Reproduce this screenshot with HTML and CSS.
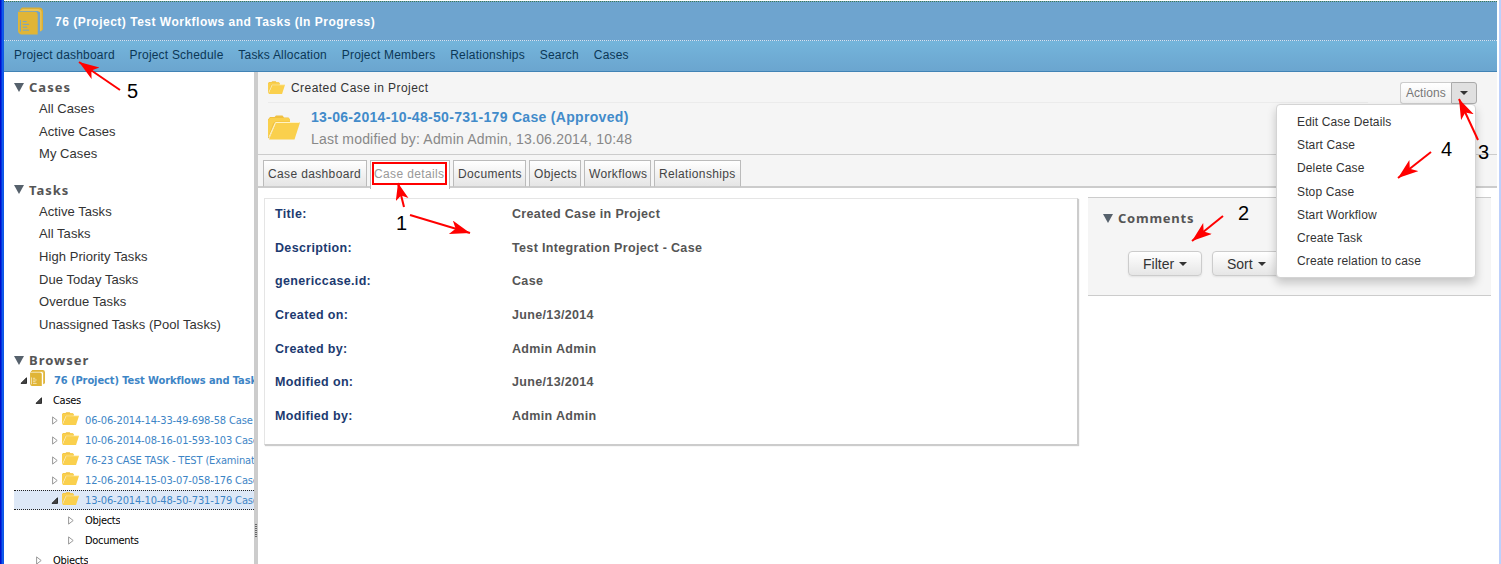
FILE: index.html
```
<!DOCTYPE html>
<html lang="en">
<head>
<meta charset="utf-8">
<title>Case details</title>
<link rel="stylesheet" href="styles.css">
</head>
<body>
<svg class="defs" width="0" height="0">
  <symbol id="folder" viewBox="0 0 32 24">
    <path fill="#f0c040" d="M0 22V4L2 1.500H6.500L8 0H14.500L16 2H20.500L22 4V8H7L1 23Z"/>
    <path fill="#fad04d" d="M0 22V5L2 2.500H20.500L22 4V6H7.500L5 8L0 22Z"/>
    <path fill="#fad04d" d="M8 7H32L26.500 24H1Z"/>
    <path fill="none" stroke="#fff3c4" stroke-width="1" d="M1 21.500L7.500 7H31"/>
  </symbol>
  <symbol id="book" viewBox="0 0 26 28">
    <path fill="#dbae34" d="M4 0H22Q26 0 26 4V23L23 25V6Q23 3.500 20 3.500H1Z"/>
    <path fill="#e9c456" d="M3 2.500L5 1.500H21Q24.500 2 24.500 5V24L23 25V6Q23 3.500 20 3.500H2Z"/>
    <path fill="#e0b537" d="M0 4.500H17.500Q20.500 4.500 20.500 8V28H3Q0 27 0 24Z"/>
    <path fill="none" stroke="currentColor" stroke-width="1" d="M2.500 13V25M5 14.500H9M5 17.500H11.500M5 20.500H9.500M5 23.500H11.500"/>
  </symbol>
  <symbol id="open" viewBox="0 0 7 7"><path fill="#444" stroke="#111" stroke-width=".8" d="M6.500 .8V6.400H.9Z"/></symbol>
  <symbol id="closed" viewBox="0 0 6 9"><path fill="#fff" stroke="#999" d="M.6 .9L5.200 4.500L.6 8.100Z"/></symbol>
  <symbol id="down" viewBox="0 0 10 9"><path fill="#56616c" d="M0 0H10L5 9Z"/></symbol>
  <symbol id="caret" viewBox="0 0 8 4"><path fill="#333" d="M0 0H8L4 4Z"/></symbol>
</svg>
<div class="window">
  <header class="top">
    <svg class="top-icon"><use href="#book"/></svg>
    <h1 class="top-title">76 (Project) Test Workflows and Tasks (In Progress)</h1>
  </header>
  <nav class="nav">
    <a>Project dashboard</a><a>Project Schedule</a><a>Tasks Allocation</a><a>Project Members</a><a>Relationships</a><a>Search</a><a>Cases</a>
  </nav>
  <div class="body">
    <aside class="side">
      <h2 class="head"><svg class="down"><use href="#down"/></svg>Cases</h2>
      <ul class="links"><li>All Cases</li><li>Active Cases</li><li>My Cases</li></ul>
      <h2 class="head"><svg class="down"><use href="#down"/></svg>Tasks</h2>
      <ul class="links"><li>Active Tasks</li><li>All Tasks</li><li>High Priority Tasks</li><li>Due Today Tasks</li><li>Overdue Tasks</li><li>Unassigned Tasks (Pool Tasks)</li></ul>
      <h2 class="head"><svg class="down"><use href="#down"/></svg>Browser</h2>
      <ul class="tree">
        <li class="l0"><svg class="open"><use href="#open"/></svg><svg class="mini-book"><use href="#book"/></svg><span>76 (Project) Test Workflows and Tasks</span></li>
        <li class="l1"><svg class="open"><use href="#open"/></svg><span>Cases</span></li>
        <li class="l2"><svg class="closed"><use href="#closed"/></svg><svg class="fold"><use href="#folder"/></svg><span>06-06-2014-14-33-49-698-58 Case</span></li>
        <li class="l2"><svg class="closed"><use href="#closed"/></svg><svg class="fold"><use href="#folder"/></svg><span>10-06-2014-08-16-01-593-103 Case</span></li>
        <li class="l2"><svg class="closed"><use href="#closed"/></svg><svg class="fold"><use href="#folder"/></svg><span>76-23 CASE TASK - TEST (Examination)</span></li>
        <li class="l2"><svg class="closed"><use href="#closed"/></svg><svg class="fold"><use href="#folder"/></svg><span>12-06-2014-15-03-07-058-176 Case</span></li>
        <li class="l2 selected"><svg class="open"><use href="#open"/></svg><svg class="fold"><use href="#folder"/></svg><span>13-06-2014-10-48-50-731-179 Case</span></li>
        <li class="l3"><svg class="closed"><use href="#closed"/></svg><span>Objects</span></li>
        <li class="l3"><svg class="closed"><use href="#closed"/></svg><span>Documents</span></li>
        <li class="l1"><svg class="closed"><use href="#closed"/></svg><span>Objects</span></li>
      </ul>
    </aside>
    <div class="splitter"><i class="grip"></i></div>
    <main class="main">
      <div class="intro">
        <div class="crumb"><svg class="fold"><use href="#folder"/></svg><span>Created Case in Project</span></div>
        <div class="case">
          <svg class="case-icon"><use href="#folder"/></svg>
          <div><h2 class="case-title">13-06-2014-10-48-50-731-179 Case (Approved)</h2><p class="case-meta">Last modified by: Admin Admin, 13.06.2014, 10:48</p></div>
        </div>
        <div class="actions">
          <div class="split"><span class="act">Actions</span><span class="toggle"><svg class="caret"><use href="#caret"/></svg></span></div>
          <ul class="menu"><li>Edit Case Details</li><li>Start Case</li><li>Delete Case</li><li>Stop Case</li><li>Start Workflow</li><li>Create Task</li><li>Create relation to case</li></ul>
        </div>
      </div>
      <div class="tabs">
        <a class="tab t1">Case dashboard</a><a class="tab t2 active">Case details</a><a class="tab t3">Documents</a><a class="tab t4">Objects</a><a class="tab t5">Workflows</a><a class="tab t6">Relationships</a>
      </div>
      <div class="content">
        <dl class="details">
          <dt>Title:</dt><dd>Created Case in Project</dd>
          <dt>Description:</dt><dd>Test Integration Project - Case</dd>
          <dt>genericcase.id:</dt><dd>Case</dd>
          <dt>Created on:</dt><dd>June/13/2014</dd>
          <dt>Created by:</dt><dd>Admin Admin</dd>
          <dt>Modified on:</dt><dd>June/13/2014</dd>
          <dt>Modified by:</dt><dd>Admin Admin</dd>
        </dl>
        <section class="comments">
          <h2 class="head"><svg class="down"><use href="#down"/></svg>Comments</h2>
          <div class="buttons"><span class="btn">Filter <svg class="caret"><use href="#caret"/></svg></span><span class="btn">Sort <svg class="caret"><use href="#caret"/></svg></span></div>
        </section>
      </div>
    </main>
  </div>
</div>
<svg class="notes" width="1501" height="564" viewBox="0 0 1501 564">
  <defs>
    <marker id="tip" markerUnits="userSpaceOnUse" markerWidth="22" markerHeight="16" refX="20" refY="7" orient="auto"><path fill="#f00" d="M20 7L0 0L5 7L0 14Z"/></marker>
    <marker id="tip-small" markerUnits="userSpaceOnUse" markerWidth="20" markerHeight="14" refX="17" refY="6.500" orient="auto"><path fill="#f00" d="M17 6.500L0 0L4 6.500L0 13Z"/></marker>
  </defs>
  <rect x="373" y="163" width="73" height="21" fill="none" stroke="#f00" stroke-width="2"/>
  <g stroke="#f00" stroke-width="2">
    <path marker-end="url(#tip)" d="M120 90L79 62"/>
    <path marker-end="url(#tip-small)" d="M404 207L398 183"/>
    <path marker-end="url(#tip)" d="M410 215L470 233"/>
    <path marker-end="url(#tip)" d="M1223 216L1192 241"/>
    <path marker-end="url(#tip)" d="M1478 140L1459 99"/>
    <path marker-end="url(#tip)" d="M1431 152L1398 178"/>
  </g>
  <g class="nums"><text x="127" y="98">5</text><text x="396" y="230">1</text><text x="1238" y="220">2</text><text x="1478" y="159">3</text><text x="1441" y="156">4</text></g>
</svg>
</body>
</html>
```

FILE: styles.css
```
* { box-sizing: border-box; }
body { margin: 0; background: #fff; color: #333; font: 13px/20px "Liberation Sans", Arial, sans-serif; overflow: hidden; }
ul, dl, dd, h1, h2, p { margin: 0; padding: 0; list-style: none; }
svg { display: block; flex: none; }
a { white-space: nowrap; }
.defs { position: absolute; }
.window { height: 564px; padding: 1px 2px 0 4px; border-right: 2px solid #bdd0fb; display: flex; flex-direction: column;
  background: linear-gradient(90deg, #0009c0 0, #0014d8 1px, #0a50e8 2px, #1468f0 3px, #0a45dc 4px, #fff 4px); }
.top { height: 40px; flex: none; display: flex; align-items: center; padding-left: 14px; background: #6ea4cf; border-top: 1px dotted #3d7a50; border-bottom: 1px dotted #d5e6f2; }
.top-icon { width: 25px; height: 28px; color: #6ea4cf; margin-right: 12px; }
.top-title { font-size: 12px; letter-spacing: .5px; color: #fff; line-height: 20px; padding-top: 2px; white-space: nowrap; }
.nav { height: 31px; flex: none; display: flex; gap: 15px; padding: 4px 10px 0; font-size: 12px; letter-spacing: .2px; color: #0b3756; background: linear-gradient(#74b5db, #6ba5cf); border-bottom: 1px solid #4183b5; }
.nav a + a { margin-left: -.2px; }
.body { flex: 1; min-height: 0; display: flex; }
.side { width: 250px; flex: none; overflow: hidden; padding: 5px 0 0 10px; }
.head { display: flex; align-items: center; gap: 5px; height: 20px; font: bold 13px/20px "Noto Sans", sans-serif; letter-spacing: 1px; color: #555; }
.down { width: 10px; height: 9px; }
.links { padding: 1px 0 14px 25px; line-height: 22.600px; letter-spacing: .06px; white-space: nowrap; }
.tree { font: 11px/20px "DejaVu Sans Condensed", "DejaVu Sans", sans-serif; font-stretch: condensed; letter-spacing: -.3px; color: #000; }
.tree li { display: flex; align-items: center; height: 20px; white-space: nowrap; }
.tree span { min-width: 0; overflow: hidden; padding-top: 1px; }
.l0 { padding-left: 6px; font-weight: bold; letter-spacing: -.08px; color: #3d85c6; }
.mini-book { width: 15px; height: 16px; color: #fff; margin: -4px 9px 0 -1px; }
.l1 { padding-left: 21px; }
.l2 { padding-left: 37px; letter-spacing: -.14px; color: #3d85c6; }
.l3 { padding-left: 53px; }
.open { width: 7px; height: 7px; margin-right: 4px; }
.closed { width: 6px; height: 9px; margin: 0 4px 0 1px; }
.l1 .open, .l1 .closed, .l3 .closed { margin-right: 11px; }
.fold { width: 17px; height: 13px; }
.tree .fold { margin: -3px 6px 0 0; }
.selected { background: #dde8f7; border: dotted #222; border-width: 1px 0; }
.splitter { width: 4px; background: #ccc; flex: none; }
.grip { display: block; width: 2px; height: 14px; margin: 452px 0 0 1px; background: repeating-linear-gradient(#666 0 1px, #ccc 1px 2px); }
.main { flex: 1; min-width: 0; display: flex; flex-direction: column; }
.intro { position: relative; height: 83px; flex: none; background: #f5f5f5; border-bottom: 1px solid #ccc; padding-left: 10px; }
.crumb { width: 1100px; height: 31px; display: flex; align-items: center; gap: 6px; border-bottom: 1px solid #ebebeb; font-size: 12px; letter-spacing: .44px; }
.crumb span { padding-top: 1px; }
.case { display: flex; gap: 11px; padding-top: 4px; }
.case-icon { width: 32px; height: 25px; margin-top: 8px; }
.case-title { font-size: 14px; line-height: 20px; letter-spacing: .31px; color: #428bca; }
.case-meta { font-size: 14px; line-height: 20px; padding-top: 2px; letter-spacing: .19px; color: #888; }
.actions { position: absolute; top: 10px; right: 20px; width: 201px; display: flex; flex-direction: column; align-items: flex-end; z-index: 2; }
.split { display: flex; height: 22px; font-size: 12px; line-height: 21px; }
.act { width: 51px; padding-left: 5px; letter-spacing: .05px; color: #777; border: 1px solid #ccc; border-right: 0; border-radius: 3px 0 0 3px; background: linear-gradient(#fff, #f0f0f0); }
.toggle { width: 26px; border: 1px solid #aaa; border-radius: 0 3px 3px 0; background: #e0e0e0; display: flex; align-items: center; justify-content: center; }
.caret { width: 8px; height: 4px; }
.menu { width: 200px; height: 174px; margin-right: 1px; padding: 6px 0 0 20px; background: #fff; border: 1px solid #d4d4d4; border-radius: 4px; box-shadow: 0 5px 10px rgba(0,0,0,.2); font-size: 12px; line-height: 23.200px; letter-spacing: .14px; }
.tabs { height: 33px; flex: none; display: flex; gap: 3px; padding: 5px 5px 0; background: #f5f5f5; border-bottom: 2px solid #ccc; }
.tab { height: 27px; border: 1px solid #bbb; border-bottom: 1px solid #ccc; padding-left: 4px; font-size: 12px; line-height: 26px; letter-spacing: .36px; color: #444; background: linear-gradient(#fff, #e5e5e5); }
.t1 { width: 104px; }
.t2 { width: 80px; }
.t3 { width: 73px; }
.t4 { width: 52px; }
.t5 { width: 67px; }
.t6 { width: 87px; }
.tab.active { height: 29px; padding-left: 3px; color: #999; background: #fff; border-bottom: 0; }
.content { display: flex; align-items: flex-start; gap: 10px; padding: 9px 6px 0; }
.details { width: 814px; height: 247px; margin-top: 1px; padding: 0 10px; display: grid; grid-template-columns: 237px 1fr; grid-auto-rows: 33.670px; align-content: start; line-height: 31px; font-weight: bold; font-size: 12.500px; letter-spacing: .34px; color: #555; border: 1px solid #e5e5e5; border-right-color: #ccc; border-bottom-color: #ccc; box-shadow: 1px 1px 1px #ccc; }
.details dt { color: #1c3a70; }
.comments { width: 403px; height: 99px; background: #f5f5f5; border: solid #ccc; border-width: 1px 0; padding: 10px 15px; }
.comments .head { letter-spacing: .75px; }
.buttons { display: flex; gap: 10px; margin: 23px 0 0 25px; }
.btn { display: flex; align-items: center; gap: 5px; width: 74px; height: 25px; padding-left: 14px; font-size: 14px; border: 1px solid #ccc; border-radius: 4px; background: linear-gradient(#fff, #e6e6e6); box-shadow: 0 1px 2px rgba(0,0,0,.08); }
.notes { position: absolute; left: 0; top: 0; z-index: 5; pointer-events: none; }
.nums { font: 20px "Liberation Sans", Arial, sans-serif; fill: #000; }
```
